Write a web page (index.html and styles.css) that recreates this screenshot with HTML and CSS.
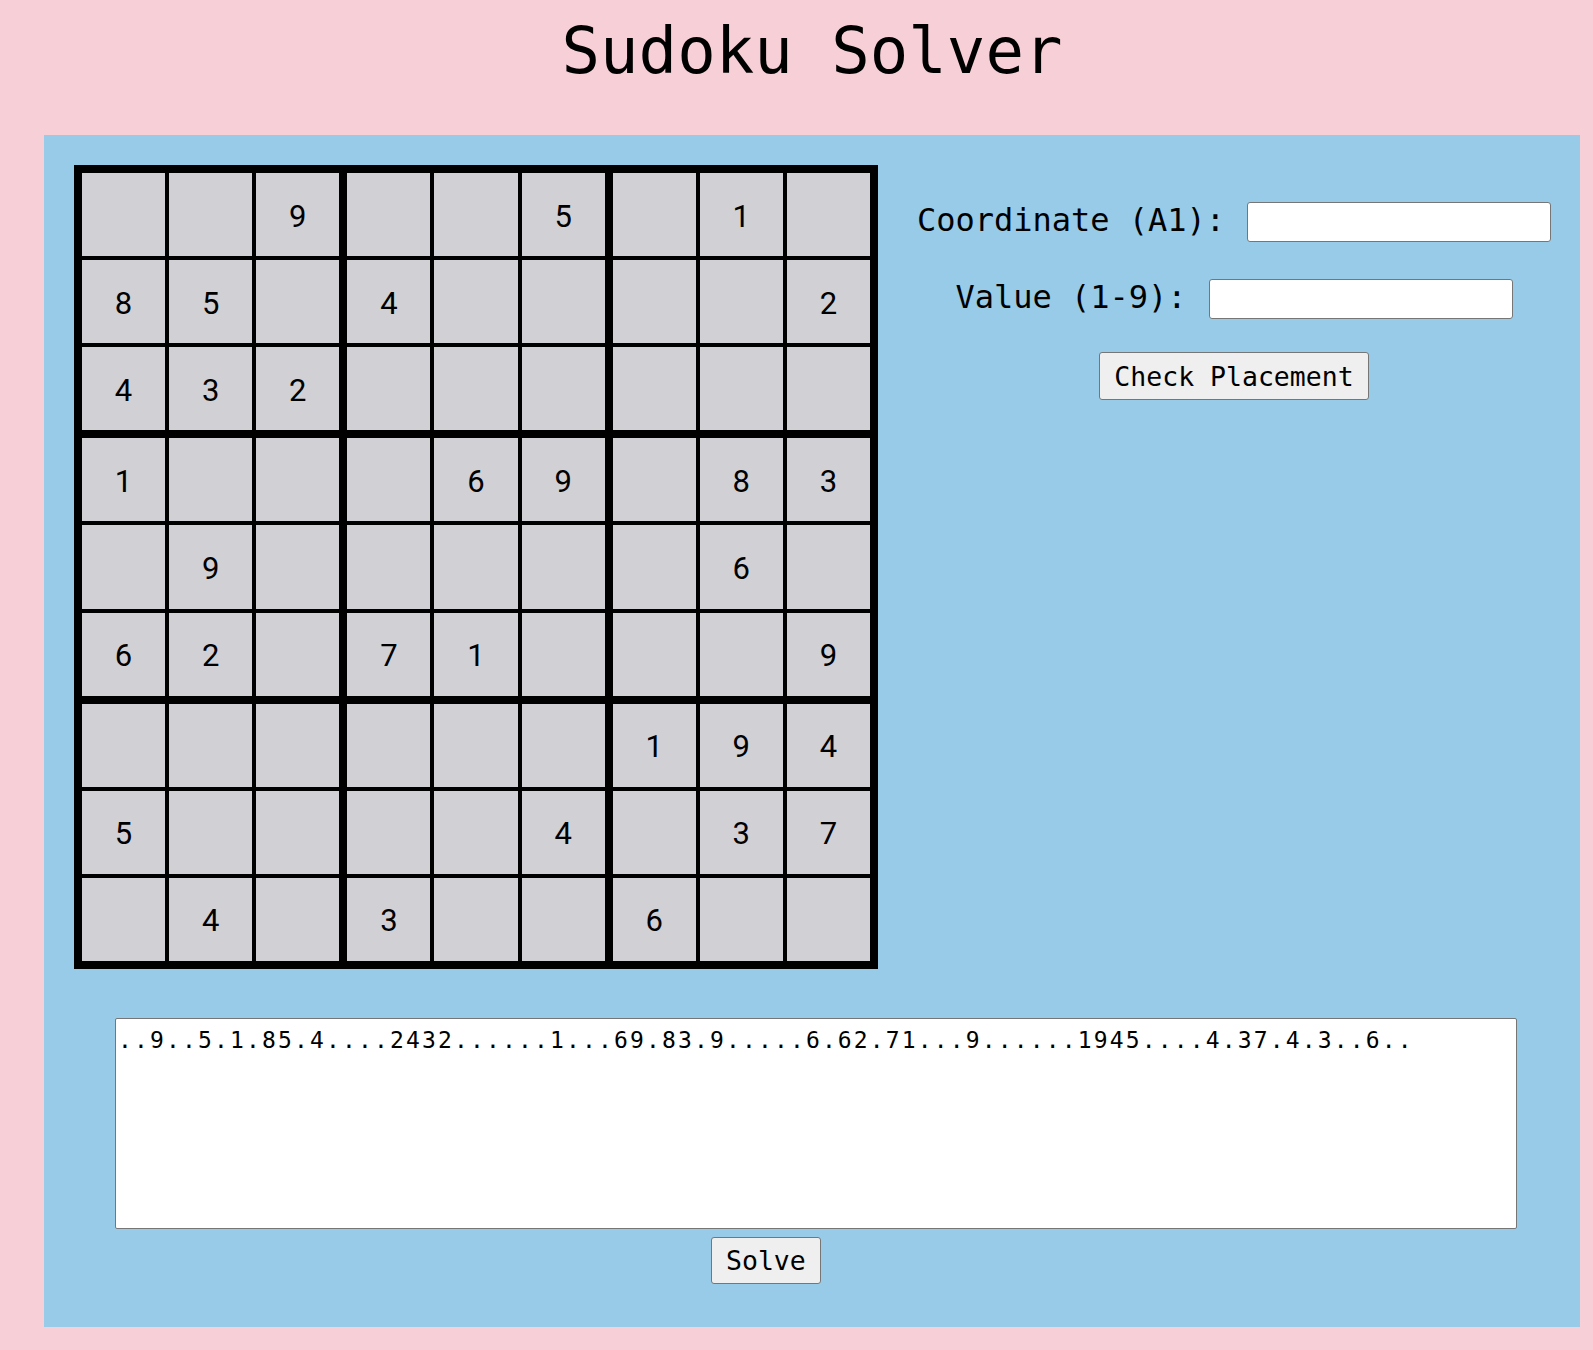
FILE: index.html
```html
<!DOCTYPE html>
<html>
<head>
<meta charset="utf-8">
<title>Sudoku Solver</title>
<link rel="stylesheet" href="styles.css">
</head>
<body>
<div class="page">
  <h1 class="title">Sudoku Solver</h1>
  <main class="panel">
    <section class="top">
      <div class="board">
        <div class="box"><div class="cell"></div><div class="cell"></div><div class="cell">9</div><div class="cell">8</div><div class="cell">5</div><div class="cell"></div><div class="cell">4</div><div class="cell">3</div><div class="cell">2</div></div>
        <div class="box"><div class="cell"></div><div class="cell"></div><div class="cell">5</div><div class="cell">4</div><div class="cell"></div><div class="cell"></div><div class="cell"></div><div class="cell"></div><div class="cell"></div></div>
        <div class="box"><div class="cell"></div><div class="cell">1</div><div class="cell"></div><div class="cell"></div><div class="cell"></div><div class="cell">2</div><div class="cell"></div><div class="cell"></div><div class="cell"></div></div>
        <div class="box"><div class="cell">1</div><div class="cell"></div><div class="cell"></div><div class="cell"></div><div class="cell">9</div><div class="cell"></div><div class="cell">6</div><div class="cell">2</div><div class="cell"></div></div>
        <div class="box"><div class="cell"></div><div class="cell">6</div><div class="cell">9</div><div class="cell"></div><div class="cell"></div><div class="cell"></div><div class="cell">7</div><div class="cell">1</div><div class="cell"></div></div>
        <div class="box"><div class="cell"></div><div class="cell">8</div><div class="cell">3</div><div class="cell"></div><div class="cell">6</div><div class="cell"></div><div class="cell"></div><div class="cell"></div><div class="cell">9</div></div>
        <div class="box"><div class="cell"></div><div class="cell"></div><div class="cell"></div><div class="cell">5</div><div class="cell"></div><div class="cell"></div><div class="cell"></div><div class="cell">4</div><div class="cell"></div></div>
        <div class="box"><div class="cell"></div><div class="cell"></div><div class="cell"></div><div class="cell"></div><div class="cell"></div><div class="cell">4</div><div class="cell">3</div><div class="cell"></div><div class="cell"></div></div>
        <div class="box"><div class="cell">1</div><div class="cell">9</div><div class="cell">4</div><div class="cell"></div><div class="cell">3</div><div class="cell">7</div><div class="cell">6</div><div class="cell"></div><div class="cell"></div></div>
      </div>
      <form class="checker">
        <div class="field">
          <label class="field-label" for="coord">Coordinate (A1):</label>
          <input class="field-input" id="coord" type="text">
        </div>
        <div class="field">
          <label class="field-label" for="val">Value (1-9):</label>
          <input class="field-input" id="val" type="text">
        </div>
        <button class="btn btn-check" type="button">Check Placement</button>
      </form>
    </section>
    <section class="bottom">
      <textarea class="puzzle-text">..9..5.1.85.4....2432......1...69.83.9.....6.62.71...9......1945....4.37.4.3..6..</textarea>
      <button class="btn btn-solve" type="button">Solve</button>
    </section>
  </main>
</div>
</body>
</html>
```
FILE: styles.css
```css
html, body {
  margin: 0;
  padding: 0;
}
body {
  background: #f7cfd6;
  color: #000;
  font-family: "DejaVu Sans Mono", "Liberation Mono", monospace;
}
.page {
  margin-left: 44px;
  width: 1536px;
}
.title {
  margin: 14px 0 46px;
  font-size: 64px;
  line-height: 75px;
  font-weight: normal;
  text-align: center;
}
.panel {
  background: #97cbe8;
  padding: 30px 0 43px;
}
.top {
  display: flex;
  align-items: flex-start;
  padding-left: 30px;
}
.board {
  width: 804px;
  height: 804px;
  box-sizing: border-box;
  background: #000;
  padding: 8px;
  display: grid;
  grid-template-columns: repeat(3, 1fr);
  grid-template-rows: repeat(3, 1fr);
  gap: 8px;
}
.box {
  display: grid;
  grid-template-columns: repeat(3, 1fr);
  grid-template-rows: repeat(3, 1fr);
  gap: 4px;
}
.cell {
  background: #d1d0d5;
  display: flex;
  align-items: center;
  justify-content: center;
  font-family: Roboto, "Noto Sans", sans-serif;
  font-size: 31px;
  padding-top: 3px;
  box-sizing: border-box;
}
.checker {
  flex: 1;
  margin: 0;
  padding-top: 37px;
  padding-left: 10px;
  display: flex;
  flex-direction: column;
  align-items: center;
  gap: 37px;
}
.field {
  display: flex;
  align-items: center;
  gap: 22px;
  height: 40px;
}
.field-label {
  font-size: 32px;
  line-height: 37px;
  position: relative;
  top: -2px;
}
.field-input {
  width: 304px;
  height: 40px;
  box-sizing: border-box;
  border: 1px solid #767676;
  border-radius: 3px;
  background: #fff;
  margin: 0;
}
.btn {
  font-family: "DejaVu Sans Mono", "Liberation Mono", monospace;
  font-size: 26.5px;
  line-height: 31px;
  padding: 7px 14px;
  background: #efefef;
  border: 1px solid #767676;
  border-radius: 3px;
  color: #000;
  margin: 0;
}
.btn-check {
  margin-top: -4px;
  height: 48px;
}
.bottom {
  padding-top: 49px;
}
.puzzle-text {
  display: block;
  margin-left: 71px;
  width: 1402px;
  height: 211px;
  box-sizing: border-box;
  border: 1px solid #767676;
  border-radius: 2px;
  padding: 8px 2px;
  font-family: "DejaVu Sans Mono", monospace;
  font-size: 23px;
  letter-spacing: 2.15px;
  resize: none;
  background: #fff;
  color: #000;
}
.btn-solve {
  display: block;
  margin: 8px 0 0 667px;
  height: 47px;
}
```
